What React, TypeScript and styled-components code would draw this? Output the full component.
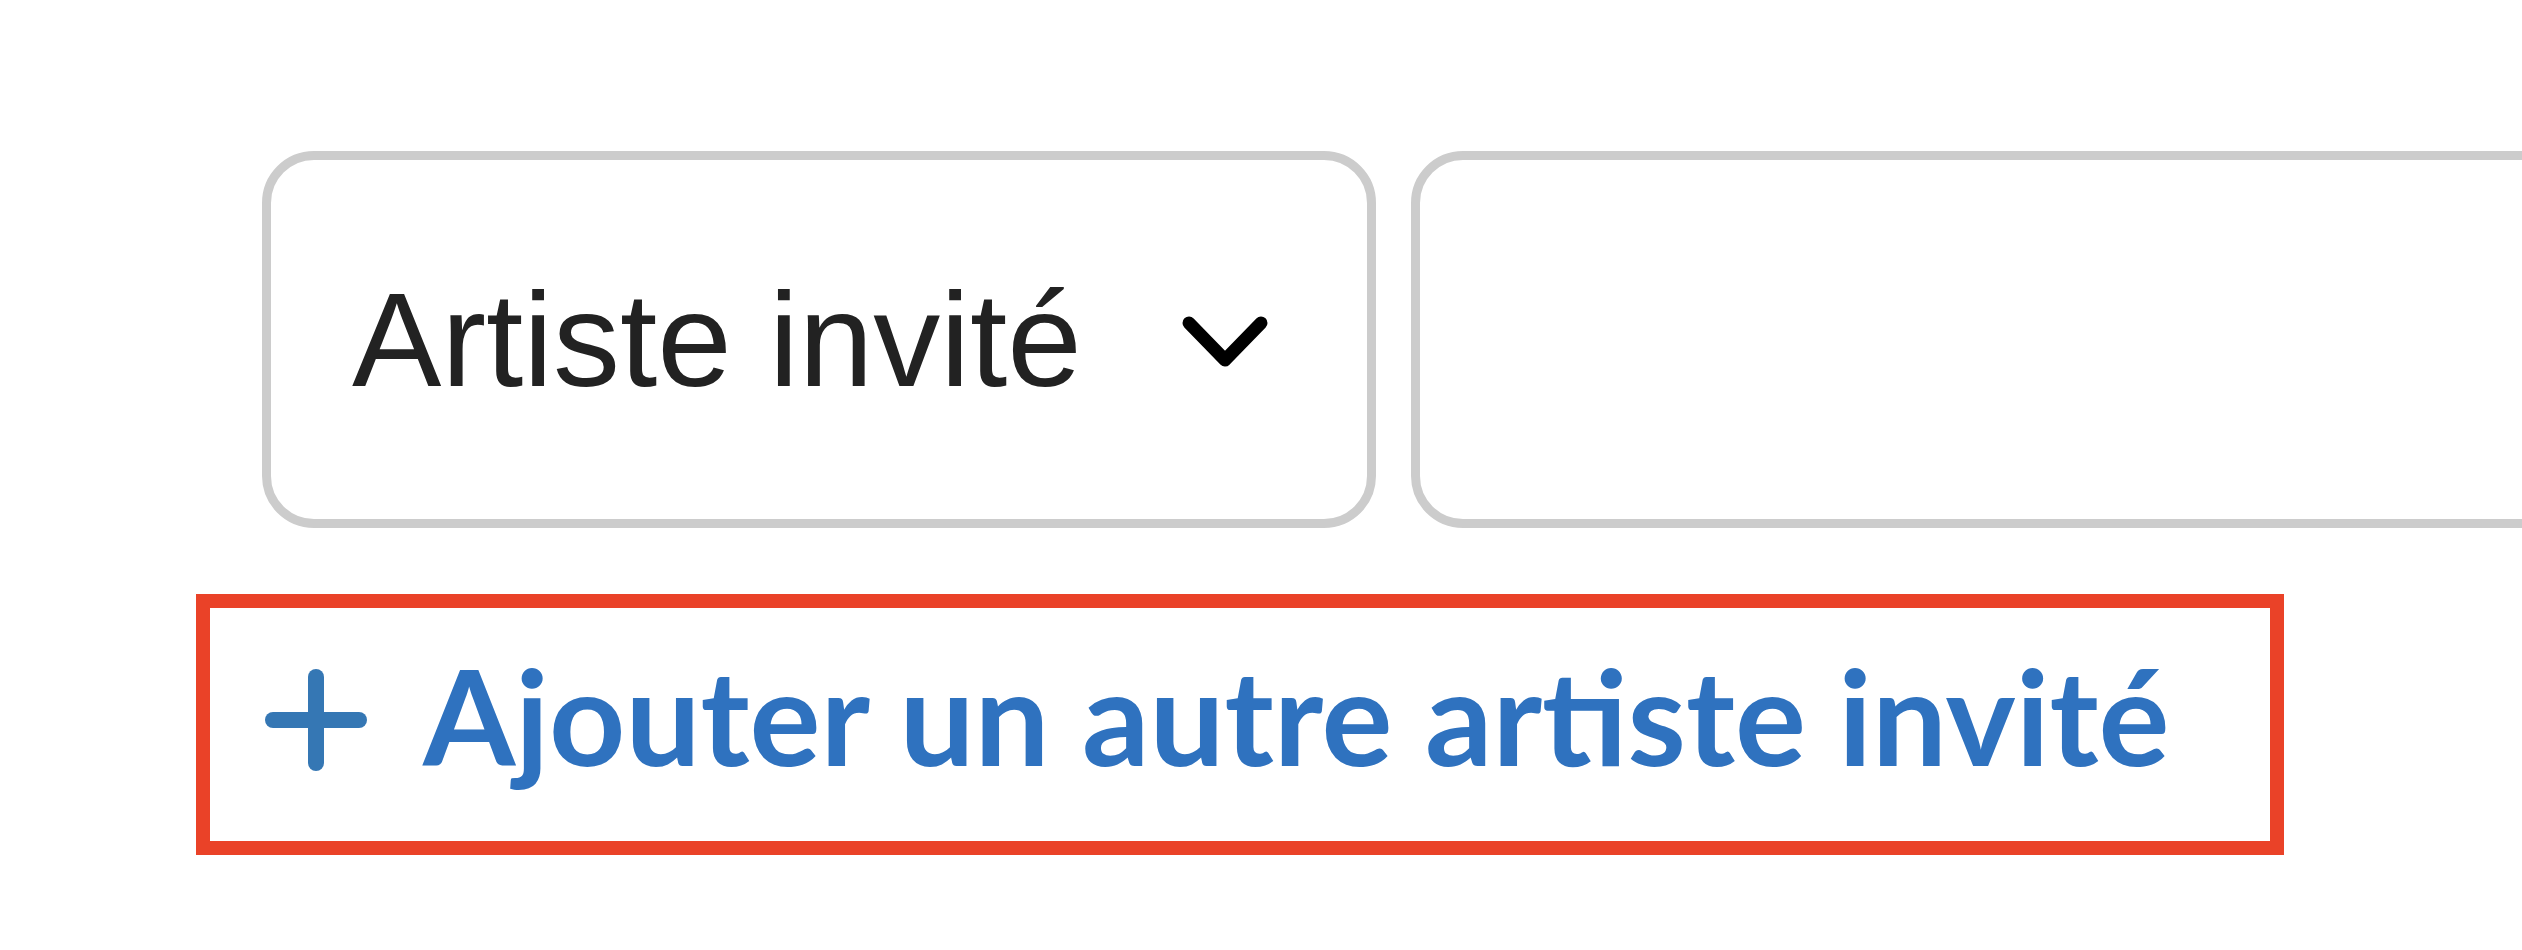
import styled, { createGlobalStyle } from "styled-components";

const GlobalStyle = createGlobalStyle`
  html, body {
    margin: 0;
    padding: 0;
    background: #ffffff;
    overflow: hidden;
  }
`;

const Page = styled.div`
  padding: 151px 0 0 196px;
  display: flex;
  flex-direction: column;
  align-items: flex-start;
  gap: 66px;
`;

const FieldRow = styled.div`
  display: flex;
  gap: 35px;
  padding-left: 66px;
`;

const Field = styled.div<{ $width: number }>`
  box-sizing: border-box;
  flex: none;
  width: ${(p) => p.$width}px;
  height: 377px;
  border: 9px solid #cccccc;
  border-radius: 52px;
  background: #ffffff;
  display: flex;
  align-items: center;
  justify-content: space-between;
  padding: 0 99px 0 81px;
`;

const SelectLabel = styled.span`
  font-family: "Liberation Sans", Arial, sans-serif;
  font-size: 134px;
  color: #222222;
  white-space: nowrap;
`;

const ChevronIcon = styled.svg`
  flex: none;
  margin-top: 4px;
`;

const AddButton = styled.button`
  box-sizing: border-box;
  height: 261px;
  display: flex;
  align-items: center;
  gap: 56px;
  padding: 0 100px 0 55px;
  border: 14px solid #ea4228;
  background: #ffffff;
  cursor: pointer;
`;

const PlusIcon = styled.svg`
  flex: none;
  margin-bottom: 10px;
`;

const AddLabel = styled.span`
  font-family: Lato, "Open Sans", sans-serif;
  font-weight: 700;
  font-size: 133px;
  color: #2f72bf;
  white-space: nowrap;
  padding-bottom: 20px;
`;

function Chevron() {
  return (
    <ChevronIcon width="86" height="52" viewBox="0 0 86 52">
      <polyline
        points="7,7 43,44 79,7"
        fill="none"
        stroke="#000000"
        strokeWidth="13"
        strokeLinecap="round"
        strokeLinejoin="round"
      />
    </ChevronIcon>
  );
}

function Plus() {
  return (
    <PlusIcon width="102" height="102" viewBox="0 0 102 102">
      <g stroke="#3577b4" strokeWidth="16" strokeLinecap="round">
        <line x1="51" y1="8" x2="51" y2="94" />
        <line x1="8" y1="51" x2="94" y2="51" />
      </g>
    </PlusIcon>
  );
}

export default function App() {
  return (
    <>
      <GlobalStyle />
      <Page>
        <FieldRow>
          <Field $width={1114}>
            <SelectLabel>Artiste invité</SelectLabel>
            <Chevron />
          </Field>
          <Field $width={1300} />
        </FieldRow>
        <AddButton type="button">
          <Plus />
          <AddLabel>Ajouter un autre artiste invité</AddLabel>
        </AddButton>
      </Page>
    </>
  );
}
